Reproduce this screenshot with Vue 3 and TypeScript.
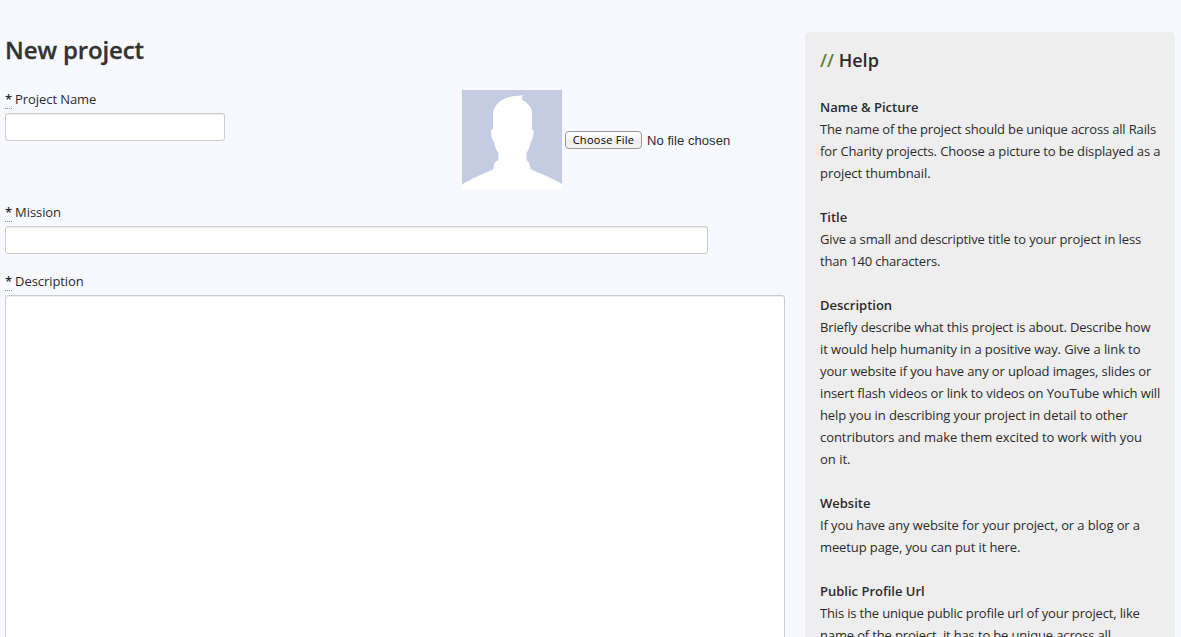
<script setup lang="ts">
interface HelpLine {
  text: string
  tracking: number
}

interface HelpSection {
  title: string
  lines: HelpLine[]
}

const line = (text: string, tracking: number): HelpLine => ({ text, tracking })

const sections: HelpSection[] = [
  {
    title: 'Name & Picture',
    lines: [
      line('The name of the project should be unique across all Rails', -0.16),
      line('for Charity projects. Choose a picture to be displayed as a', -0.125),
      line('project thumbnail.', -0.06),
    ],
  },
  {
    title: 'Title',
    lines: [
      line('Give a small and descriptive title to your project in less', -0.13),
      line('than 140 characters.', -0.18),
    ],
  },
  {
    title: 'Description',
    lines: [
      line('Briefly describe what this project is about. Describe how', -0.15),
      line('it would help humanity in a positive way. Give a link to', -0.11),
      line('your website if you have any or upload images, slides or', -0.12),
      line('insert flash videos or link to videos on YouTube which will', -0.12),
      line('help you in describing your project in detail to other', -0.11),
      line('contributors and make them excited to work with you', -0.06),
      line('on it.', 0),
    ],
  },
  {
    title: 'Website',
    lines: [
      line('If you have any website for your project, or a blog or a', -0.11),
      line('meetup page, you can put it here.', -0.11),
    ],
  },
  {
    title: 'Public Profile Url',
    lines: [
      line('This is the unique public profile url of your project, like', -0.16),
      line('name of the project, it has to be unique across all', -0.15),
    ],
  },
]
</script>

<template>
  <div class="page">
    <main class="form">
      <h1>New project</h1>
      <div class="top-row">
        <div class="field name-field">
          <label for="name"><abbr>*</abbr> Project Name</label>
          <input id="name" type="text" />
        </div>
        <div class="picture">
          <svg class="avatar" viewBox="0 0 100 100" aria-hidden="true">
            <rect width="100" height="100" fill="#c5cbe3" />
            <path
              fill="#fff"
              d="M0 94.5C8 89.500 20 84 31 79.500L32.500 73L34.500 71L36.300 70.500V62.500C34 60 32.500 56 32 51.500C29.500 50 29.200 44 29 39.800L31 39.500V23C32 13 43 6 56 5.800L61.500 5.300C60 6.500 59.500 8 59.800 9.500C65 12.500 69.800 17 70 22V39.500L71.800 40C71.500 46 70.500 50.500 68.800 51.500C68 57 66.500 60.500 64.500 62.500V70.500L66.500 71.500L69 79.500C80 84 92 89 100 94V100H0Z"
            />
          </svg>
          <button type="button">Choose File</button>
          <span class="file-status">No file chosen</span>
        </div>
      </div>
      <div class="field mission-field">
        <label for="mission"><abbr>*</abbr> Mission</label>
        <input id="mission" type="text" />
      </div>
      <div class="field">
        <label for="description"><abbr>*</abbr> Description</label>
        <textarea id="description"></textarea>
      </div>
    </main>
    <aside class="help">
      <h2><span class="slashes">//</span> Help</h2>
      <section v-for="s in sections" :key="s.title">
        <h3>{{ s.title }}</h3>
        <p v-for="l in s.lines" :key="l.text" :style="{ letterSpacing: l.tracking + 'px' }">{{ l.text }}</p>
      </section>
    </aside>
  </div>
</template>

<style>
html,
body {
  margin: 0;
  overflow: hidden;
  background: #f8f9ff;
}
</style>

<style scoped>
.page {
  box-sizing: border-box;
  display: flex;
  align-items: flex-start;
  gap: 20px;
  height: 637px;
  padding: 32px 6px 0 5px;
  overflow: hidden;
  background: #f8f9ff;
  color: #2b2b2b;
  font: 13px/22px 'Open Sans', sans-serif;
}
.form {
  width: 780px;
  flex: none;
}
h1 {
  margin: 0;
  height: 58px;
  font-size: 24px;
  line-height: 36px;
  font-weight: 600;
  letter-spacing: -0.12px;
  color: #333;
  -webkit-text-stroke: 0.3px #333;
}
.top-row {
  display: flex;
  height: 113px;
}
.name-field {
  width: 457px;
}
.field label {
  display: block;
  height: 23px;
  line-height: 18px;
  letter-spacing: -0.08px;
}
.field abbr {
  display: inline-block;
  width: 7px;
  height: 18px;
  margin-right: -0.2px;
  border-bottom: 1px dotted #888;
  font-weight: 600;
}
input,
textarea {
  box-sizing: border-box;
  display: block;
  margin: 0;
  padding: 4px 6px;
  border: 1px solid #ccc;
  border-radius: 3px;
  background: #fff;
  box-shadow: inset 0 1px 1px rgba(0, 0, 0, 0.075);
  outline: none;
  resize: none;
}
input {
  width: 220px;
  height: 28px;
}
.mission-field {
  height: 69px;
}
.mission-field input {
  width: 703px;
}
textarea {
  width: 780px;
  height: 400px;
}
.picture {
  display: flex;
  align-items: center;
  height: 100px;
}
.avatar {
  width: 100px;
  height: 100px;
}
button {
  box-sizing: border-box;
  width: 77px;
  height: 18px;
  margin: 0 5px 0 3px;
  padding: 0 0 1px;
  border: 1px solid #999;
  border-radius: 4px;
  background: linear-gradient(#fff, #f4f4f4 50%, #ebebeb 51%, #f5f5f5);
  color: #000;
  font: 11px/14px 'Open Sans', sans-serif;
  letter-spacing: 0.28px;
  white-space: nowrap;
}
.file-status {
  padding-top: 1px;
  font: 13px/18px 'Liberation Sans', Arial, sans-serif;
  letter-spacing: 0.06px;
  white-space: nowrap;
}
.help {
  box-sizing: border-box;
  width: 370px;
  height: 650px;
  flex: none;
  padding: 15px;
  border-radius: 5px;
  background: #eee;
}
h2 {
  margin: 0 0 22px;
  font-size: 18px;
  line-height: 27px;
  font-weight: 600;
}
.slashes {
  color: #5f7f33;
}
section {
  margin-bottom: 22px;
}
h3 {
  margin: 0;
  font-size: 13px;
  line-height: 22px;
  font-weight: 600;
}
p {
  margin: 0;
  white-space: nowrap;
}
</style>
